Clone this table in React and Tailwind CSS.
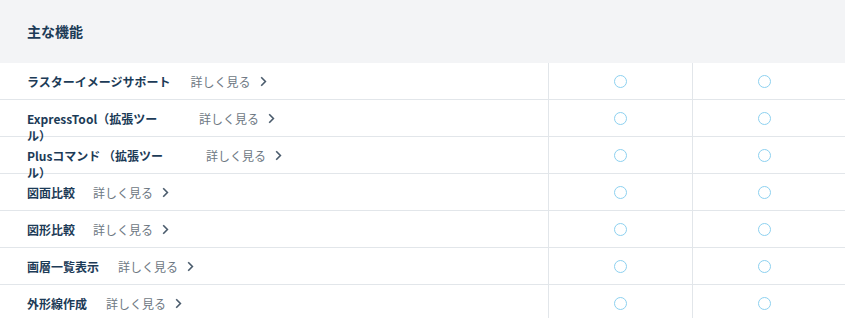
import React from 'react'

const features = [
  { name: 'ラスターイメージサポート', gap: 'ml-[20px]' },
  { name: 'ExpressTool（拡張ツール）', width: 'w-[131px]', gap: 'ml-[41px]' },
  { name: 'Plusコマンド （拡張ツール）', width: 'w-[137px]', gap: 'ml-[42px]' },
  { name: '図面比較', gap: 'ml-[18px]' },
  { name: '図形比較', gap: 'ml-[18px]' },
  { name: '画層一覧表示', gap: 'ml-[19px]' },
  { name: '外形線作成', gap: 'ml-[19px]' },
]

const Chevron = () => (
  <svg width="7" height="11" viewBox="0 0 7 11" className="ml-[9px] shrink-0">
    <path d="M1.2 1.2 L5.4 5.5 L1.2 9.8" fill="none" stroke="#4a5b6c" strokeWidth="1.6" />
  </svg>
)

const Mark = () => (
  <span className="block w-[13px] h-[13px] rounded-full border-[1.5px] border-[#8dd1f0]" />
)

const App = () => {
  return (
    <div
      className="w-[845px] h-[318px] overflow-hidden bg-white"
      style={{ fontFamily: '"Noto Sans CJK JP", "Noto Sans", sans-serif' }}
    >
      <div className="h-[63px] bg-[#f3f4f6] flex items-center px-[27px]">
        <h2 className="text-[14px] font-bold text-[#1c3b57]">主な機能</h2>
      </div>
      {features.map((f) => (
        <div key={f.name} className="flex h-[37px] border-b border-[#e2e6ea]">
          <div className="w-[549px] border-r border-[#e2e6ea] flex items-start pl-[27px] pt-[10px]">
            <span className={`shrink-0 text-[12px] leading-[17px] font-bold text-[#1c3b57] ${f.width || ''}`}>
              {f.name}
            </span>
            <a className={`${f.gap} flex items-center text-[12px] leading-[17px] text-[#6e7883] whitespace-nowrap`}>
              詳しく見る
              <Chevron />
            </a>
          </div>
          <div className="w-[144px] border-r border-[#e2e6ea] flex items-center justify-center">
            <Mark />
          </div>
          <div className="w-[142px] flex items-center justify-center">
            <Mark />
          </div>
          <div className="flex-1" />
        </div>
      ))}
    </div>
  )
}

export default App
